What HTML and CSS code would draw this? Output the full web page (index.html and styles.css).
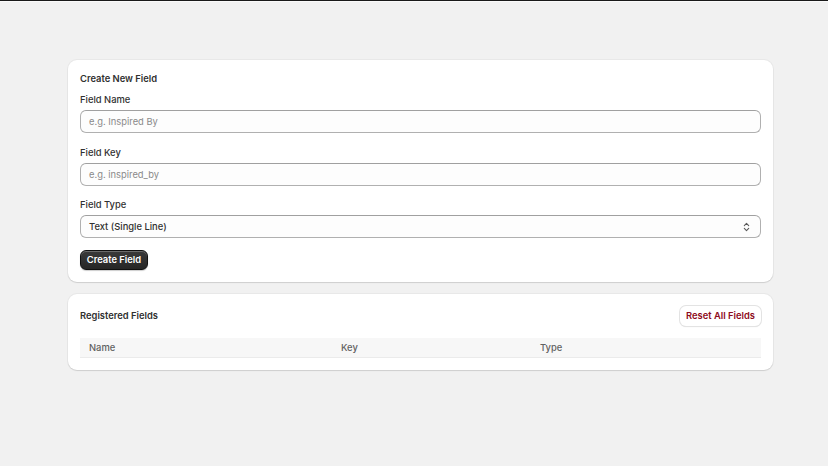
FILE: index.html
```html
<!DOCTYPE html>
<html lang="en">
<head>
<meta charset="utf-8">
<title>Fields</title>
<link rel="stylesheet" href="styles.css">
</head>
<body>
<div class="topline"></div>
<main class="page">
  <section class="card">
    <h2 class="card-title">Create New Field</h2>
    <div class="field">
      <label class="label">Field Name</label>
      <div class="input"><span class="placeholder">e.g. Inspired By</span></div>
    </div>
    <div class="field">
      <label class="label">Field Key</label>
      <div class="input"><span class="placeholder">e.g. inspired_by</span></div>
    </div>
    <div class="field">
      <label class="label">Field Type</label>
      <div class="input select">
        <span class="value">Text (Single Line)</span>
        <svg class="chev" width="7" height="10" viewBox="0 0 7 10" fill="none" stroke="#5a5a5a" stroke-width="1.1" stroke-linecap="round" stroke-linejoin="round"><path d="M1.3 3.6 L3.5 1.4 L5.7 3.6"/><path d="M1.3 6.4 L3.5 8.6 L5.7 6.4"/></svg>
      </div>
    </div>
    <div class="actions">
      <button class="btn btn-primary">Create Field</button>
    </div>
  </section>

  <section class="card">
    <div class="card-head">
      <h2 class="card-title">Registered Fields</h2>
      <button class="btn btn-secondary">Reset All Fields</button>
    </div>
    <div class="table-head">
      <div class="th">Name</div>
      <div class="th">Key</div>
      <div class="th">Type</div>
    </div>
  </section>
</main>
</body>
</html>
```
FILE: styles.css
```css
* { box-sizing: border-box; }
html, body { margin: 0; padding: 0; }
body {
  background: #f1f1f1;
  font-family: Inter, "Noto Sans", "Liberation Sans", sans-serif;
  font-size: 9.4px;
  color: #303030;
  height: 466px;
  overflow: hidden;
}
.topline {
  height: 2px;
  background: #1a1a1a;
  border-bottom: 1px solid #fafafa;
}
.page {
  width: 705px;
  margin-left: 68px;
  padding-top: 58px;
  display: flex;
  flex-direction: column;
  gap: 12px;
}
.card {
  background: #fff;
  border-radius: 9px;
  padding: 12px;
  box-shadow: 0 1px 1px rgba(26,26,26,.12), 0 0 0 1px rgba(26,26,26,.04);
}
.card-title {
  margin: 0;
  font-size: 9.4px;
  font-weight: 600;
  line-height: 14px;
  color: #303030;
}
.field { margin-top: 8px; display: flex; flex-direction: column; }
.field + .field { margin-top: 13.5px; }
.label {
  line-height: 12px;
  margin-bottom: 4px;
  color: #303030;
  font-weight: 450;
}
.input {
  height: 23px;
  border: 1px solid #b0b0b0;
  border-top-color: #a0a0a0;
  border-radius: 6px;
  display: flex;
  align-items: center;
  padding: 0 8px;
  background: #fdfdfd;
}
.placeholder { color: #8a8a8a; }
.select { justify-content: space-between; }
.value { color: #303030; font-weight: 450; }
.chev { margin-right: 2px; }
.actions { margin-top: 11.5px; display: flex; }
.btn {
  font-family: inherit;
  font-size: 9.4px;
  font-weight: 600;
  height: 20px;
  border-radius: 6px;
  padding: 0 8px;
  white-space: nowrap;
  cursor: pointer;
  line-height: 1;
}
.btn-primary {
  background: linear-gradient(#3a3a3a, #262626);
  color: #fff;
  border: 1px solid #111;
  box-shadow: inset 0 1px 0 rgba(255,255,255,.25), 0 1px 1px rgba(0,0,0,.2);
  width: 68px;
  padding: 0;
}
.btn-secondary {
  background: #fff;
  color: #8e0b21;
  border: none;
  box-shadow: 0 0 0 1px #e3e3e3, 0 1px 1px rgba(0,0,0,.15);
  width: 81px;
  padding: 0;
}
.card-head {
  display: flex;
  justify-content: space-between;
  align-items: center;
}
.table-head {
  margin-top: 12px;
  display: grid;
  grid-template-columns: 252px 199px 1fr;
  height: 20px;
  background: #f7f7f7;
  border-bottom: 1px solid #ebebeb;
  align-items: center;
}
.th { padding-left: 9px; color: #616161; font-weight: 450; }
```
